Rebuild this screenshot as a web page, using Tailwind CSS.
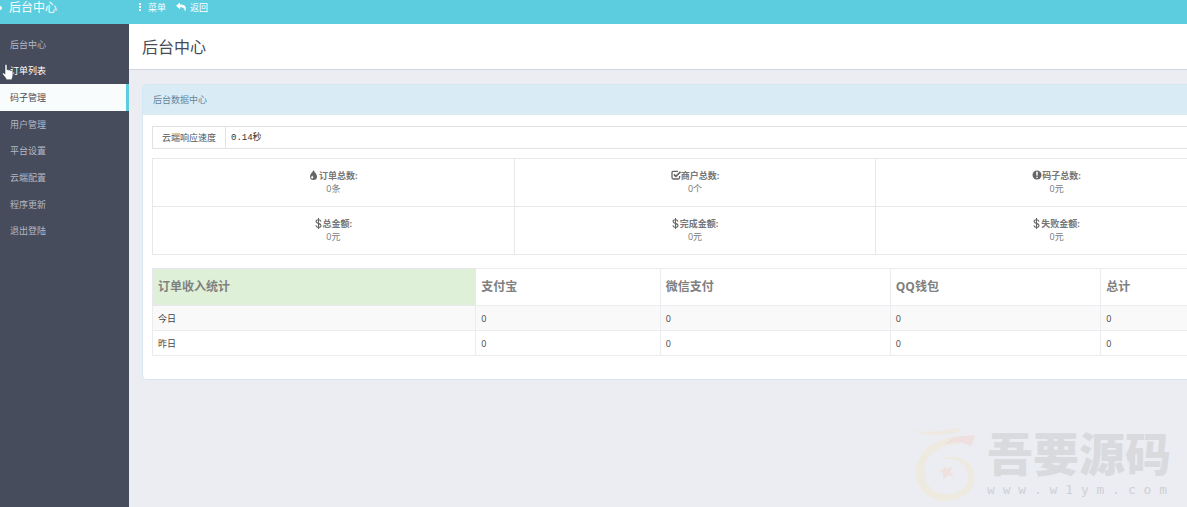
<!DOCTYPE html>
<html lang="zh-CN">
<head>
<meta charset="utf-8">
<title>后台中心</title>
<script src="https://cdn.jsdelivr.net/npm/@tailwindcss/browser@4"></script>
</head>
<body class="relative flex min-h-screen flex-col overflow-x-hidden bg-[#ebedf2] font-['Open_Sans','Noto_Sans_CJK_SC',sans-serif] text-[9px] leading-[13px] text-[#58666e]">
<header class="flex h-6 shrink-0 bg-[#5ccddf] text-white">
  <div class="flex w-[129px] shrink-0 items-start">
    <span class="mt-1.5 h-1 w-0.5 rounded-r-full bg-white"></span>
    <a href="#" class="ml-[7px] text-xs leading-4">后台中心</a>
  </div>
  <nav class="flex items-start gap-2.5 pl-2">
    <button type="button" class="flex h-3.5 items-center gap-[5px]">
      <svg class="h-2.5 w-1.5" viewBox="0 0 6 10" fill="currentColor"><path d="M2 1h2v2H2zM2 4h2v2H2zM2 7h2v2H2z"/></svg>菜单
    </button>
    <a href="#" class="flex h-3.5 items-center gap-1">
      <svg class="h-2.5 w-2.5" viewBox="0 0 10 10" fill="currentColor"><path d="M0 3.800 4 .4v2c3.800 0 6 1.500 6 4.300 0 1.200-.5 2.200-1.300 2.800C9 7 8 5.300 4 5.300v2z"/></svg>返回
    </a>
  </nav>
</header>
<div class="flex flex-1">
  <aside class="w-[129px] shrink-0 bg-[#464c5b] pt-[7px] text-[#b4b8c5]">
    <nav class="grid h-[213px] grid-rows-8">
      <a href="#" class="flex items-center pl-2.5">后台中心</a>
      <a href="#" class="flex items-center pl-2.5 text-white">订单列表</a>
      <a href="#" class="flex items-center border-r-3 border-[#5ccddf] bg-[#f9fcfd] pl-2.5 text-[#464c5b]">码子管理</a>
      <a href="#" class="flex items-center pl-2.5">用户管理</a>
      <a href="#" class="flex items-center pl-2.5">平台设置</a>
      <a href="#" class="flex items-center pl-2.5">云端配置</a>
      <a href="#" class="flex items-center pl-2.5">程序更新</a>
      <a href="#" class="flex items-center pl-2.5">退出登陆</a>
    </nav>
  </aside>
  <main class="min-w-0 flex-1 overflow-hidden">
    <div class="flex h-[46px] items-center border-b border-[#d4d7e2] bg-white pl-[13px]">
      <h1 class="text-base text-[#464b55]">后台中心</h1>
    </div>
    <section class="mt-3.5 -mr-[61px] ml-[13px] rounded-sm border border-[#d3e8f0] bg-white">
      <h2 class="flex h-[30px] items-center bg-[#d9ecf6] px-2.5 pb-0.5 text-[#64859a]">后台数据中心</h2>
      <div class="px-[9px] pt-[11px] pb-[23px]">
        <div class="flex h-[23px] border border-[#dfe3e8]">
          <label for="speed" class="flex w-[73px] shrink-0 items-center justify-center border-r border-[#dfe3e8] text-[#555]">云端响应速度</label>
          <input id="speed" type="text" value="0.14秒" readonly class="min-w-0 flex-1 px-[5px] pt-0.5 font-['Liberation_Mono','Noto_Sans_CJK_SC',monospace] text-[9px] text-[#333] outline-none">
        </div>
        <table class="mt-[9px] w-full table-fixed border-collapse text-center text-[#777]">
          <tr class="h-12">
            <td class="border border-[#e8e8ea] pb-0.5">
              <b class="flex items-center justify-center gap-px"><svg class="h-2.5 w-[9px]" viewBox="0 0 8 10"><path fill="#666" d="M4 0c.6 2 3.500 3.800 3.500 6.400a3.500 3.500 0 0 1-7 0C.5 3.800 3.400 2 4 0z"/><path fill="#fff" d="M2.700 5.600c.2.700 1.200 1.100 1.200 2a1.200 1.200 0 0 1-2.300 0c0-.8.900-1.300 1.100-2z"/></svg>订单总数:</b>0条
            </td>
            <td class="border border-[#e8e8ea] pb-0.5">
              <b class="flex items-center justify-center"><svg class="h-2.5 w-2.5" viewBox="0 0 10 10" fill="none" stroke="#666" stroke-width="1.300"><path d="M7 1.300H2.300C1.500 1.300 1 1.800 1 2.500v5C1 8.300 1.500 9 2.300 9h5c.8 0 1.300-.7 1.300-1.500V6"/><path stroke-width="1.700" d="m2.900 4.300 2 2L9.500 1.800"/></svg>商户总数:</b>0个
            </td>
            <td class="border border-[#e8e8ea] pb-0.5">
              <b class="flex items-center justify-center"><svg class="h-2.5 w-2.5" viewBox="0 0 10 10"><circle cx="5" cy="5" r="4.500" fill="#666"/><path fill="#fff" d="M4.100 1.800h1.800l-.3 4H4.400zM4.300 6.700h1.400V8H4.300z"/></svg>码子总数:</b>0元
            </td>
          </tr>
          <tr class="h-12">
            <td class="border border-[#e8e8ea] pb-0.5">
              <b class="flex items-center justify-center gap-px"><svg class="h-[11px] w-[7px]" viewBox="0 0 6 10" fill="none" stroke="#666" stroke-width="1"><path d="M3 0v10M5.300 3.200C5 2.100 4.200 1.600 3 1.600c-1.400 0-2.200.7-2.200 1.600C.8 5.500 5.300 4.300 5.300 6.800c0 1-.9 1.700-2.300 1.700-1.300 0-2.200-.6-2.400-1.800"/></svg>总金额:</b>0元
            </td>
            <td class="border border-[#e8e8ea] pb-0.5">
              <b class="flex items-center justify-center gap-px"><svg class="h-[11px] w-[7px]" viewBox="0 0 6 10" fill="none" stroke="#666" stroke-width="1"><path d="M3 0v10M5.300 3.200C5 2.100 4.200 1.600 3 1.600c-1.400 0-2.200.7-2.200 1.600C.8 5.500 5.300 4.300 5.300 6.800c0 1-.9 1.700-2.300 1.700-1.300 0-2.200-.6-2.400-1.800"/></svg>完成金额:</b>0元
            </td>
            <td class="border border-[#e8e8ea] pb-0.5">
              <b class="flex items-center justify-center gap-px"><svg class="h-[11px] w-[7px]" viewBox="0 0 6 10" fill="none" stroke="#666" stroke-width="1"><path d="M3 0v10M5.300 3.200C5 2.100 4.200 1.600 3 1.600c-1.400 0-2.200.7-2.200 1.600C.8 5.500 5.300 4.300 5.300 6.800c0 1-.9 1.700-2.300 1.700-1.300 0-2.200-.6-2.400-1.800"/></svg>失败金额:</b>0元
            </td>
          </tr>
        </table>
        <table class="mt-[13px] w-full table-fixed border-collapse text-left text-[#444]">
          <thead>
            <tr class="h-[37px] text-xs text-[#808080]">
              <th class="w-[29.8%] border border-[#e8e8ee] bg-[#dff0d8] px-[5px]">订单收入统计</th>
              <th class="w-[17%] border border-[#ececf0] px-[5px]">支付宝</th>
              <th class="w-[21.2%] border border-[#ececf0] px-[5px]">微信支付</th>
              <th class="w-[19.4%] border border-[#ececf0] px-[5px]">QQ钱包</th>
              <th class="border border-[#ececf0] px-[5px]">总计</th>
            </tr>
          </thead>
          <tbody>
            <tr class="h-[25px] bg-[#f9f9f9]">
              <td class="border border-[#ececf0] px-[5px]">今日</td><td class="border border-[#ececf0] px-[5px]">0</td><td class="border border-[#ececf0] px-[5px]">0</td><td class="border border-[#ececf0] px-[5px]">0</td><td class="border border-[#ececf0] px-[5px]">0</td>
            </tr>
            <tr class="h-[25px]">
              <td class="border border-[#ececf0] px-[5px]">昨日</td><td class="border border-[#ececf0] px-[5px]">0</td><td class="border border-[#ececf0] px-[5px]">0</td><td class="border border-[#ececf0] px-[5px]">0</td><td class="border border-[#ececf0] px-[5px]">0</td>
            </tr>
          </tbody>
        </table>
      </div>
    </section>
  </main>
</div>
<!-- Watermark -->
<div class="pointer-events-none absolute right-4 bottom-1.5 flex items-end gap-2.5 text-[#d9dade]">
  <svg class="h-[74px] w-16" viewBox="0 0 66 76">
    <path fill="#eee9e3" d="M0 3c15 4 30 0 47-2 3 1 2 4-2 5-17 2-32 5-45-3z"/>
    <path fill="#eeeae0" d="M3 47C3 25 22 11 46 10l8-1-7 9C28 17 14 29 12 42c-2 17 9 27 24 27 13 0 21-9 21-18C57 38 43 29 28 34c10-8 35-4 35 18 0 15-14 24-29 24C16 76 3 65 3 47z"/>
    <path fill="#efe0df" d="m44 10 9-1 11-1-4 12-6-3c-8-3-17-1-22 2 4-5 8-8 12-9z"/>
    <path fill="#efe2de" d="m31 40 4 3 5-3-1 6 3 4-6 0-5 4 0-6-4-4 5 0z"/>
  </svg>
  <div>
    <div class="text-[46px] leading-[52px] font-black">吾要源码</div>
    <div class="font-['DejaVu_Sans_Mono',monospace] text-[13px] leading-[22px] whitespace-nowrap text-[#cfd0d6]">w w w . w 1 y m . c o m</div>
  </div>
</div>
<!-- Hand pointer -->
<svg class="pointer-events-none absolute top-16 left-0.5 h-[17px] w-3" viewBox="0 0 12 17"><path fill="#fff" stroke="#333b46" stroke-width=".5" d="M3 1.500c0-1.300 2-1.300 2 0V6c.3-.8 1.800-.6 1.900.3.500-.7 1.800-.4 1.900.5.600-.6 2-.2 2 .9v4c0 1.500-1 2.500-1 4H4.300c0-1.600-2-3.200-3.600-5.400-.6-1 .6-1.900 1.400-1.100l.9 1z"/></svg>
</body>
</html>
